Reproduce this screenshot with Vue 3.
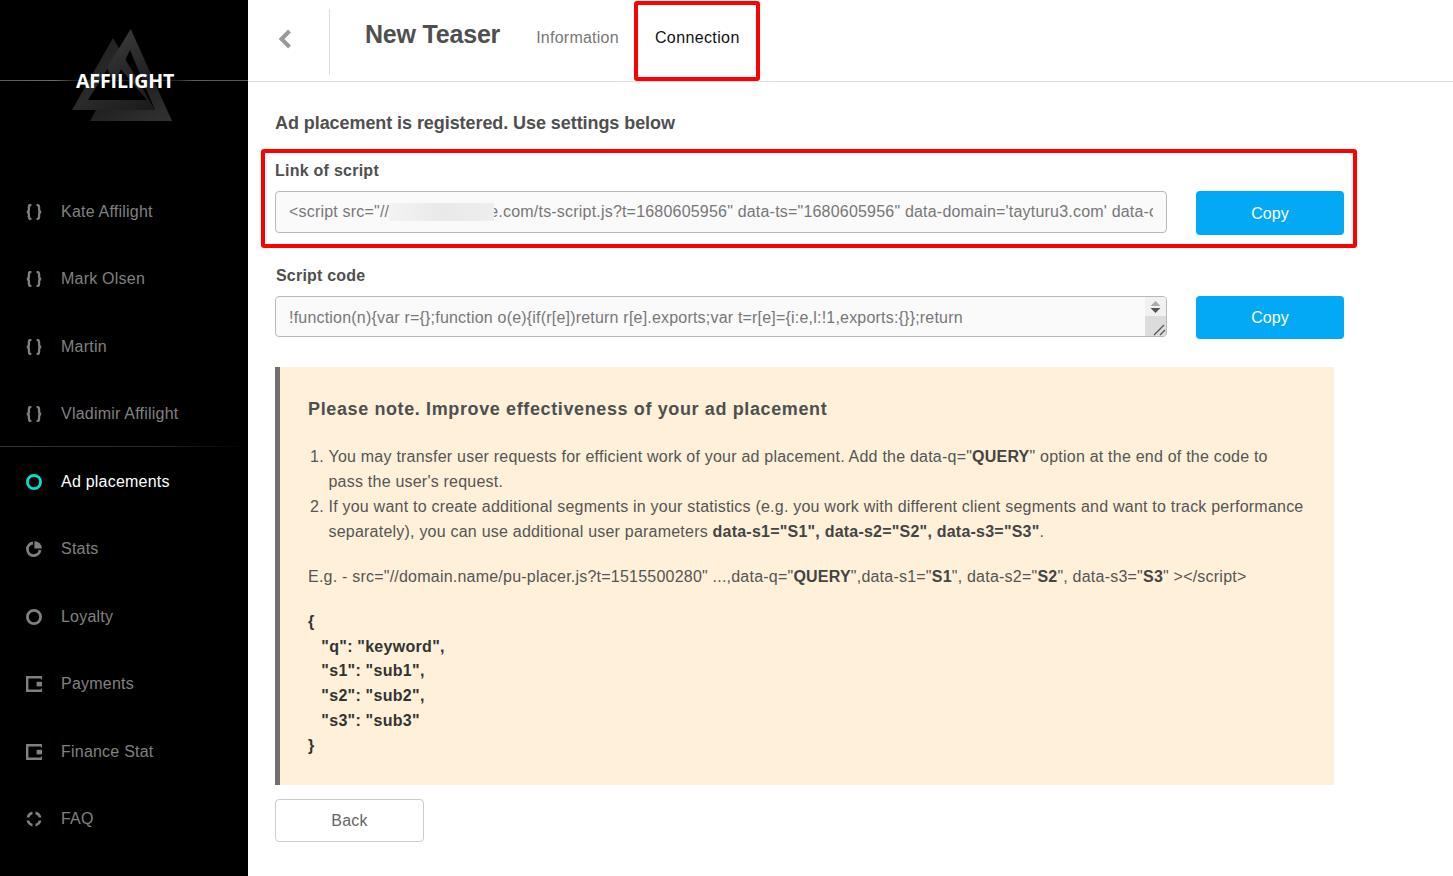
<script setup>
const items = [
  { label: 'Kate Affilight', icon: 'braces' },
  { label: 'Mark Olsen', icon: 'braces' },
  { label: 'Martin', icon: 'braces' },
  { label: 'Vladimir Affilight', icon: 'braces', divider: true },
  { label: 'Ad placements', icon: 'ring', active: true },
  { label: 'Stats', icon: 'pie' },
  { label: 'Loyalty', icon: 'ring' },
  { label: 'Payments', icon: 'wallet' },
  { label: 'Finance Stat', icon: 'wallet' },
  { label: 'FAQ', icon: 'faq' },
]
</script>

<template>
  <div class="page">
    <aside class="side">
      <div class="logo">
        <svg class="logo-art" width="248" height="130" viewBox="0 0 248 130">
          <defs>
            <linearGradient id="tb" x1="0" y1="0" x2="1" y2="1">
              <stop offset="0" stop-color="#1c1c1c" />
              <stop offset="0.5" stop-color="#2a2a2a" />
              <stop offset="1" stop-color="#1a1a1a" />
            </linearGradient>
            <linearGradient id="tf" x1="0.3" y1="0" x2="0.8" y2="1">
              <stop offset="0" stop-color="#3c3c3c" />
              <stop offset="0.6" stop-color="#1f1f1f" />
              <stop offset="1" stop-color="#303030" />
            </linearGradient>
            <linearGradient id="ln" x1="0" y1="0" x2="1" y2="0">
              <stop offset="0" stop-color="#5a5a5a" />
              <stop offset="0.22" stop-color="#6a6a6a" />
              <stop offset="0.3" stop-color="#222" />
              <stop offset="0.71" stop-color="#222" />
              <stop offset="0.78" stop-color="#5a5a5a" />
              <stop offset="1" stop-color="#555" />
            </linearGradient>
          </defs>
          <path fill="url(#tb)" fill-rule="evenodd" d="M113 38 L155 110 L72 110 Z M113 60 L88 100 L147 100 Z" />
          <path fill="url(#tf)" fill-rule="evenodd" d="M130.7 29 L172 121 L90 121 L96 110 L155 110 L130 50 L114 84 L107 68 Z" />
          <rect x="0" y="80" width="248" height="1" fill="url(#ln)" />
        </svg>
        <span class="logo-text">AFFILIGHT</span>
      </div>
      <nav class="nav">
        <div v-for="it in items" :key="it.label" class="nav-item" :class="{ active: it.active, divided: it.divider }">
          <svg class="nav-icon" width="16" height="16" viewBox="0 0 16 16">
            <template v-if="it.icon === 'braces'">
              <path d="M5.4 .8C3.4 .8 2.9 1.6 2.9 3.2V5.8C2.9 7 2.2 8 .8 8 2.2 8 2.9 9 2.9 10.2V12.8C2.9 14.4 3.4 15.2 5.4 15.2" fill="none" stroke="currentColor" stroke-width="2.3" />
              <path d="M10.6 .8C12.6 .8 13.1 1.6 13.1 3.2V5.8C13.1 7 13.8 8 15.2 8 13.8 8 13.1 9 13.1 10.2V12.8C13.1 14.4 12.6 15.2 10.6 15.2" fill="none" stroke="currentColor" stroke-width="2.3" />
            </template>
            <circle v-else-if="it.icon === 'ring'" cx="8" cy="8" r="6.6" fill="none" stroke="currentColor" stroke-width="2.8" />
            <template v-else-if="it.icon === 'pie'">
              <path d="M7 2A6.3 6.3 0 1 0 14 9" fill="none" stroke="currentColor" stroke-width="2.8" />
              <path d="M8.4 0.2A7.4 7.4 0 0 1 15.8 7.6H8.4Z" fill="currentColor" />
            </template>
            <template v-else-if="it.icon === 'wallet'">
              <path d="M16 3.4V1.2H1.2V14.8H16V12.6" fill="none" stroke="currentColor" stroke-width="2.4" />
              <rect x="10.6" y="5.8" width="5.4" height="4.6" fill="currentColor" />
            </template>
            <template v-else>
              <path d="M6.4.6A7.5 7.5 0 0 0 .6 6.4L3.2 6.6A5 5 0 0 1 6.6 3.2Z M9.6.6A7.5 7.5 0 0 1 15.4 6.4L12.8 6.6A5 5 0 0 0 9.4 3.2Z M6.4 15.4A7.5 7.5 0 0 1 .6 9.6L3.2 9.4A5 5 0 0 0 6.6 12.8Z M9.6 15.4A7.5 7.5 0 0 0 15.4 9.6L12.8 9.4A5 5 0 0 1 9.4 12.8Z" fill="currentColor" />
            </template>
          </svg>
          <span>{{ it.label }}</span>
        </div>
      </nav>
    </aside>

    <main class="main">
      <header class="head">
        <div class="back-cell">
          <svg width="14" height="20" viewBox="0 0 14 20">
            <path d="M11.5 2 L3.5 10 L11.5 18" fill="none" stroke="#999" stroke-width="4" />
          </svg>
        </div>
        <h1 class="title">New Teaser</h1>
        <div class="tabs">
          <a class="tab">Information</a>
          <a class="tab on">Connection</a>
        </div>
        <div class="mark mark-tab"></div>
      </header>

      <section class="body">
        <h2 class="lead">Ad placement is registered. Use settings below</h2>

        <div class="block first">
          <div class="mark mark-link"></div>
          <label class="lbl">Link of script</label>
          <div class="row">
            <div class="field single">
              <span class="clip">&lt;script src="//<i class="blur"></i>e.com/ts-script.js?t=1680605956" data-ts="1680605956" data-domain='tayturu3.com' data-cfasync="false"&gt;&lt;/script&gt;</span>
            </div>
            <button class="copy tall">Copy</button>
          </div>
        </div>

        <div class="block second">
          <label class="lbl shift">Script code</label>
          <div class="row">
            <div class="field multi">
              <span class="clip">!function(n){var r={};function o(e){if(r[e])return r[e].exports;var t=r[e]={i:e,l:!1,exports:{}};return</span>
              <div class="scroll">
                <div class="arrows">
                  <svg width="11" height="14" viewBox="0 0 11 14">
                    <path d="M5.5 1 L10.5 6 H.5Z" fill="#aaa" />
                    <path d="M5.5 13 L10.5 8 H.5Z" fill="#555" />
                  </svg>
                </div>
                <div class="grip">
                  <svg width="13" height="12" viewBox="0 0 13 12">
                    <path d="M1 11 L11 1 M7 11 L12 6" stroke="#555" stroke-width="1.3" fill="none" />
                  </svg>
                </div>
              </div>
            </div>
            <button class="copy">Copy</button>
          </div>
        </div>

        <div class="note">
          <h3 class="note-title">Please note. Improve effectiveness of your ad placement</h3>
          <ol class="steps">
            <li>You may transfer user requests for efficient work of your ad placement. Add the data-q="<b>QUERY</b>" option at the end of the code to pass the user's request.</li>
            <li>If you want to create additional segments in your statistics (e.g. you work with different client segments and want to track performance separately), you can use additional user parameters <b>data-s1="S1", data-s2="S2", data-s3="S3"</b>.</li>
          </ol>
          <p class="eg">E.g. - src="//domain.name/pu-placer.js?t=1515500280" ...,data-q="<b>QUERY</b>",data-s1="<b>S1</b>", data-s2="<b>S2</b>", data-s3="<b>S3</b>" &gt;&lt;/script&gt;</p>
          <pre class="json">{
   "q": "keyword",
   "s1": "sub1",
   "s2": "sub2",
   "s3": "sub3"
}</pre>
        </div>

        <button class="back-btn">Back</button>
      </section>
    </main>
  </div>
</template>

<style>
html, body { margin: 0; background: #fff; }
</style>

<style scoped>
.page {
  display: flex;
  width: 1453px;
  height: 876px;
  overflow: hidden;
  font-family: "Liberation Sans", Arial, sans-serif;
  font-size: 16px;
  background: #fff;
}
.side {
  width: 248px;
  flex: none;
  background: #000;
  display: flex;
  flex-direction: column;
}
.logo {
  position: relative;
  height: 178px;
  flex: none;
}
.logo-art { position: absolute; left: 0; top: 0; }
.logo-text {
  position: absolute;
  left: 76px;
  top: 69px;
  font-family: "Open Sans", sans-serif;
  font-weight: 700;
  font-size: 19.5px;
  line-height: 23px;
  letter-spacing: -0.1px;
  color: #fff;
}
.nav { display: flex; flex-direction: column; }
.nav-item {
  height: 67.5px;
  box-sizing: border-box;
  display: flex;
  align-items: center;
  gap: 19px;
  padding-left: 26px;
  color: #808080;
  letter-spacing: 0.22px;
  position: relative;
}
.nav-item.divided::after {
  content: "";
  position: absolute;
  left: 0;
  right: 0;
  bottom: 1px;
  height: 1px;
  background: linear-gradient(90deg, #333, #2a2a2a 60%, #000);
}
.nav-item.active { color: #fff; }
.nav-item.active .nav-icon { color: #00e0c8; }
.nav-icon { flex: none; }

.main { flex: 1; min-width: 0; display: flex; flex-direction: column; }
.head {
  position: relative;
  height: 82px;
  box-sizing: border-box;
  flex: none;
  display: flex;
  border-bottom: 1px solid #ddd;
}
.back-cell {
  width: 82px;
  height: 66px;
  margin-top: 9px;
  box-sizing: border-box;
  border-right: 1px solid #ddd;
  padding: 20px 0 0 30px;
}
.title {
  margin: 19px 0 0 35px;
  font-size: 25px;
  line-height: 30px;
  font-weight: 700;
  color: #4f4f4f;
  letter-spacing: -0.2px;
}
.tabs { display: flex; margin-left: 36px; gap: 36px; }
.tab {
  height: 81px;
  box-sizing: border-box;
  padding-top: 28px;
  line-height: 20px;
  color: #777;
  letter-spacing: 0.25px;
}
.tab.on { color: #111; border-bottom: 3px solid #333; letter-spacing: 0.38px; }
.mark {
  position: absolute;
  box-sizing: border-box;
  border: 4px solid #f00;
  border-radius: 3px;
  pointer-events: none;
}
.mark-tab { left: 386px; top: 1px; width: 126px; height: 80px; }
.mark-link { left: -14px; top: -12px; width: 1096px; height: 99px; }

.body { padding: 0 0 0 27px; display: flex; flex-direction: column; }
.lead {
  margin: 30px 0 0;
  font-size: 18px;
  line-height: 22px;
  font-weight: 700;
  color: #4f4f4f;
  letter-spacing: -0.07px;
}
.block { position: relative; }
.block.first { margin-top: 27px; }
.block.second { margin-top: 31px; }
.lbl {
  display: block;
  font-weight: 700;
  line-height: 20px;
  color: #4f4f4f;
  letter-spacing: 0.25px;
}
.lbl.shift { padding-left: 1px; letter-spacing: 0.2px; }
.row { display: flex; gap: 29px; margin-top: 10px; align-items: flex-start; }
.field {
  width: 892px;
  box-sizing: border-box;
  display: flex;
  background: #fafafa;
  border: 1px solid #b8b8b8;
  border-radius: 4px;
  color: #777;
  letter-spacing: 0.2px;
}
.field.single { height: 42px; padding: 0 13px; }
.field.multi { height: 41px; padding-left: 13px; }
.clip {
  flex: 1;
  min-width: 0;
  overflow: hidden;
  white-space: nowrap;
  line-height: 39px;
}
.multi .clip { line-height: 41px; }
.blur {
  display: inline-block;
  width: 105px;
  height: 18px;
  margin: 0 -5px 0 0;
  vertical-align: -4px;
  position: relative;
  background: linear-gradient(90deg, #f3f3f3, #e9e9e9 50%, #eeeeee);
}
.scroll {
  width: 21px;
  flex: none;
  margin-left: 6px;
  display: flex;
  flex-direction: column;
  border-radius: 0 3px 3px 0;
  overflow: hidden;
}
.arrows {
  height: 19px;
  background: #f1f1f1;
  display: flex;
  justify-content: center;
  align-items: center;
}
.grip {
  flex: 1;
  background: #dcdcdc;
  display: flex;
  justify-content: flex-end;
  align-items: flex-end;
}
.copy {
  width: 148px;
  height: 43px;
  border: 0;
  padding: 0;
  border-radius: 4px;
  background: #03a9f4;
  color: #fff;
  font: inherit;
}
.copy.tall { height: 44px; padding-top: 2px; }

.note {
  margin-top: 28px;
  width: 1059px;
  height: 418px;
  box-sizing: border-box;
  background: #fef0d9;
  border-left: 5px solid #707070;
  padding: 31px 29px 0 28px;
  color: #555;
  letter-spacing: 0.22px;
}
.note-title {
  margin: 0;
  font-size: 18px;
  line-height: 22px;
  font-weight: 700;
  color: #4f4f4f;
  letter-spacing: 0.62px;
}
.steps {
  margin: 24px 0 0;
  padding: 0 0 0 20.5px;
  line-height: 25px;
}
.eg { margin: 21px 0 0; line-height: 24.7px; }
.json {
  margin: 20px 0 0;
  font-family: inherit;
  font-weight: 700;
  line-height: 24.8px;
  color: #333;
  letter-spacing: 0.3px;
  word-spacing: -0.3px;
}
b { color: #444; }
.back-btn {
  margin-top: 14px;
  width: 149px;
  height: 43px;
  background: #fff;
  border: 1px solid #ccc;
  border-radius: 4px;
  font: inherit;
  color: #666;
  padding: 0;
  letter-spacing: 0.2px;
}
</style>
